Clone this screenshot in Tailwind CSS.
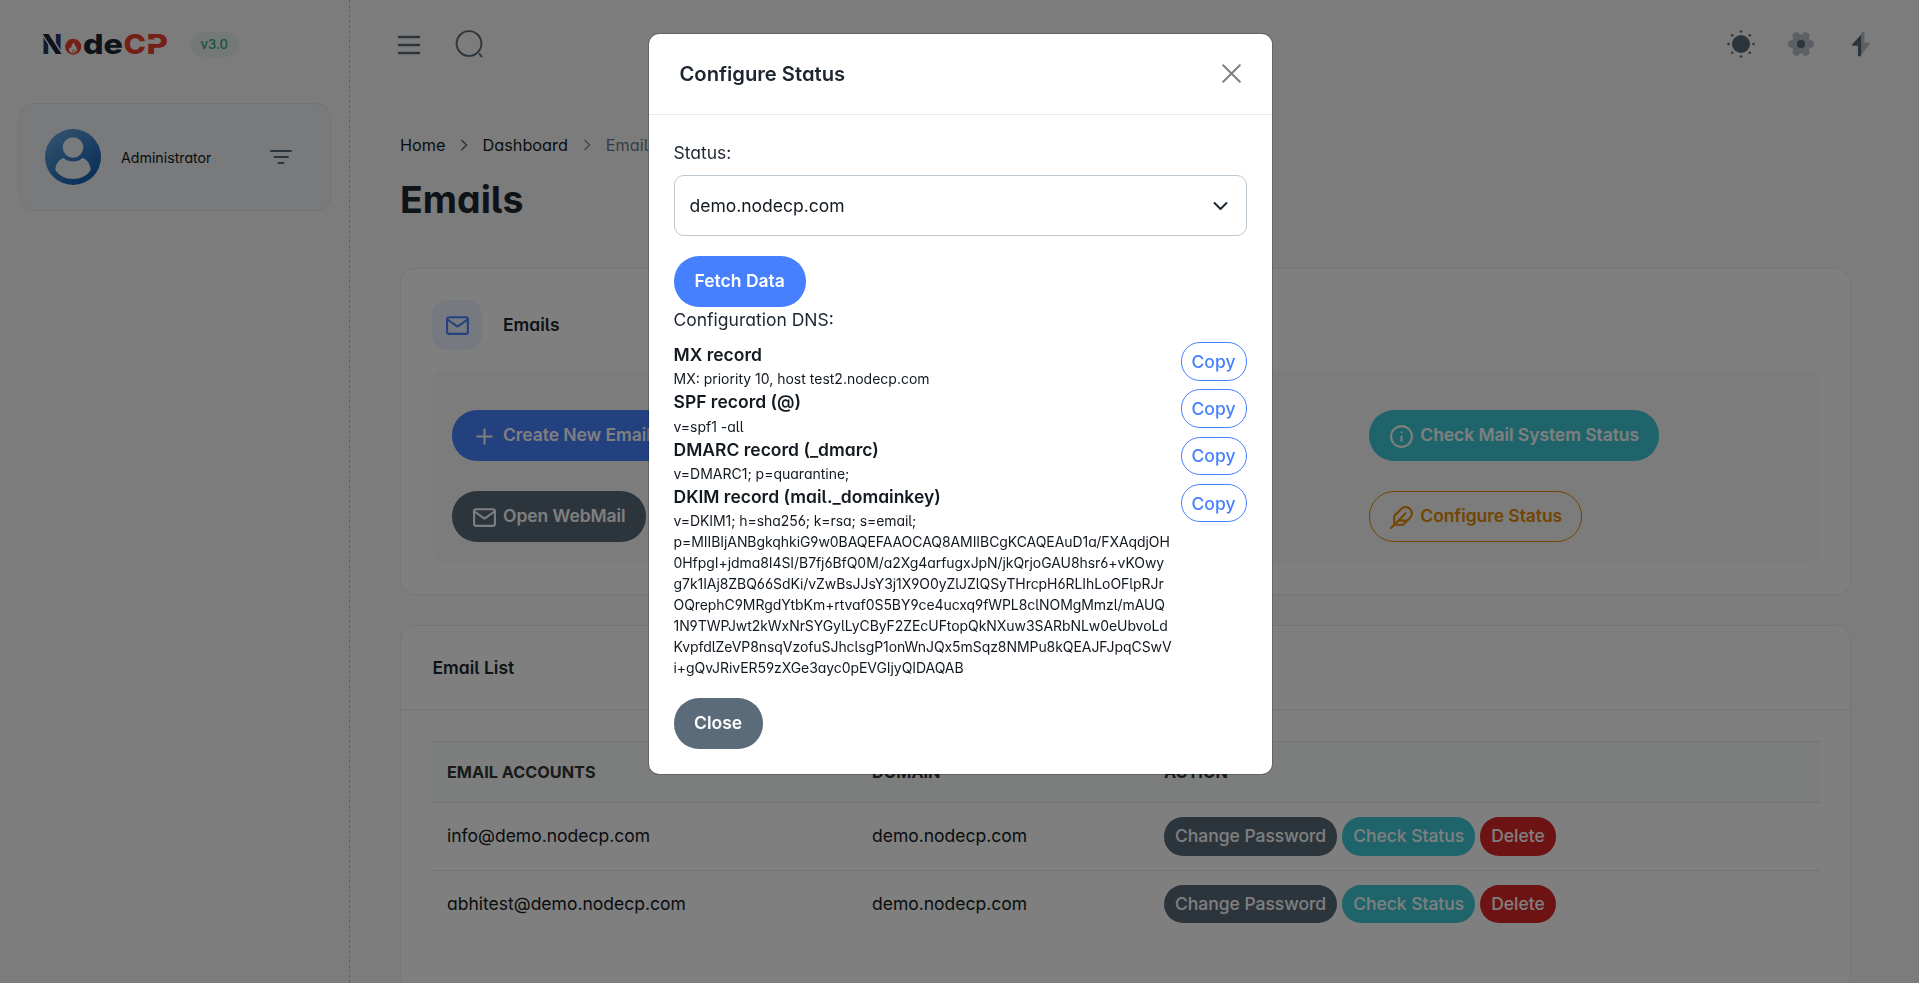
<!DOCTYPE html>
<html lang="en">
<head>
<meta charset="utf-8">
<title>NodeCP - Emails</title>
<script src="https://cdn.jsdelivr.net/npm/@tailwindcss/browser@4"></script>
</head>
<body class="h-[983px] overflow-hidden bg-[#f8f9fa] font-['Inter',sans-serif] text-[17.5px] leading-[26.25px] text-[#131920] [font-feature-settings:'cv03','cv04','cv05','cv11']">
<div class="flex h-[983px] overflow-hidden">

  <!-- Sidebar -->
  <aside class="w-[350px] shrink-0 border-r border-dashed border-[#bec8d0]">
    <div class="flex h-[103px] items-start pt-[26px] pl-[42px]">
      <svg class="h-[37px] w-[130px] overflow-visible" viewBox="0 -6 130 37" font-family="Inter" font-weight="800" font-size="27.5">
        <text x="0" y="22" fill="#2a3763" textLength="20" lengthAdjust="spacingAndGlyphs">N</text>
        <path d="M-.5 1.300h7.500l14 21.500h-7.500z" fill="#1c2733" stroke="#f8f9fa" stroke-width="1.400"/>
        <circle cx="31.200" cy="14.700" r="8" fill="#e8402f"/>
        <path d="M31 21.200c-3.600 0-5-3.600-2.800-6.200.3 1 .7 1.300 1 1.300.1-2.400 1-4.600 2.800-6.100-.2 2.500 2.600 4 2.900 7 .3 2.200-1.200 4-3.900 4z" fill="#f8f9fa"/>
        <path d="M29.800 21.200l1.700-4M32.900 21v-3" stroke="#e8402f" stroke-width=".8"/>
        <text x="41" y="22" fill="#1c2733" textLength="40" lengthAdjust="spacingAndGlyphs">de</text>
        <text x="81.500" y="22" fill="#e8402f" textLength="22.500" lengthAdjust="spacingAndGlyphs">C</text>
        <text x="104.500" y="22" fill="#e8402f" textLength="21.500" lengthAdjust="spacingAndGlyphs">P</text>
        <path d="M104.500 7.500h8v4.300h-8z" fill="#f8f9fa"/>
      </svg>
      <span class="mt-[6px] ml-[18px] h-[25px] rounded-full bg-[#e8f3ef] px-[10.5px] text-[13.1px] leading-[25px] font-medium text-[#2ca87f]">v3.0</span>
    </div>
    <div class="mr-[18px] ml-[19px] flex h-[108px] items-center rounded-[15px] border border-[#e3e8ed] bg-[#f1f4f7] pl-[25px]">
      <svg class="h-14 w-14" viewBox="0 0 56 56">
        <defs><linearGradient id="av" x1="0.1" y1="0" x2=".8" y2="1"><stop offset="0" stop-color="#69a8dc"/><stop offset="1" stop-color="#0d5cb4"/></linearGradient></defs>
        <circle cx="28" cy="28" r="28" fill="url(#av)"/>
        <circle cx="28" cy="18.500" r="10.300" fill="#f1f4f7"/>
        <path d="M18.500 29c2.500 2.500 6 3.500 9.500 3.500s7-1 9.500-3.500c5 1.500 8 6.500 8.300 12C42 47 35 50 28 50s-14-3-17.700-9c.3-5.500 3.200-10.500 8.200-12z" fill="#f1f4f7"/>
      </svg>
      <span class="mt-[2px] ml-5 text-[14.2px]">Administrator</span>
      <svg class="ml-[59px] h-[16px] w-[22px]" viewBox="0 0 22 16" fill="none" stroke="#5b6b79" stroke-width="1.900" stroke-linecap="round"><path d="M1 2h20M4.500 8h13.500M8.500 14h5"/></svg>
    </div>
  </aside>

  <!-- Page -->
  <div class="flex min-w-0 flex-1 flex-col pr-[68px] pl-[50px]">
    <header class="flex h-[88px] shrink-0 items-center">
      <svg class="mt-[2px] -ml-[3px] h-[20px] w-[24px]" viewBox="0 0 24 20" stroke="#5b6b79" stroke-width="2.400" stroke-linecap="round"><path d="M2 2h20M2 10h20M2 18h20"/></svg>
      <svg class="ml-[33px] h-[30px] w-[30px]" viewBox="0 0 30 30" fill="none" stroke="#5b6b79" stroke-width="1.900" stroke-linecap="round"><circle cx="15" cy="14.500" r="12.400"/><path d="M25.500 25l2 2.500"/></svg>
      <div class="-mr-[24px] ml-auto flex items-center gap-[32px]">
        <svg class="h-[28px] w-[28px]" viewBox="0 0 28 28" fill="#5b6b79"><circle cx="14" cy="14" r="9"/><circle cx="14" cy="1.500" r="1.300"/><circle cx="14" cy="26.500" r="1.300"/><circle cx="1.500" cy="14" r="1.300"/><circle cx="26.500" cy="14" r="1.300"/><circle cx="5.200" cy="5.200" r="1.300"/><circle cx="22.800" cy="5.200" r="1.300"/><circle cx="5.200" cy="22.800" r="1.300"/><circle cx="22.800" cy="22.800" r="1.300"/></svg>
        <svg class="h-[28px] w-[28px]" viewBox="0 0 28 28" fill="#5b6b79"><g opacity=".4"><circle cx="14" cy="14" r="9.500"/><rect x="1.200" y="10.300" width="25.600" height="7.400" rx="3"/><rect x="1.200" y="10.300" width="25.600" height="7.400" rx="3" transform="rotate(60 14 14)"/><rect x="1.200" y="10.300" width="25.600" height="7.400" rx="3" transform="rotate(120 14 14)"/></g><circle cx="14" cy="14" r="4.100"/></svg>
        <svg class="h-[28px] w-[28px]" viewBox="0 0 28 28" fill="#5b6b79"><path d="M14.200 4.500v20.500c-1 2-3 2-3.300.5v-9.700H6.400c-1.500 0-1.800-.9-1-1.900z"/><path opacity=".4" d="M14.200 12.500V3.500c.8-2.300 3.300-2.200 3.300-.5v9.500h4.600c1.200 0 1.400.9.700 1.800L14.200 24.500z"/></svg>
      </div>
    </header>

    <nav class="mt-[44px] flex h-[26px] items-center text-[16.25px]">
      <span>Home</span>
      <svg class="mr-[15px] ml-[14px] h-[12px] w-[8px]" viewBox="0 0 8 12" fill="none" stroke="#5b6b79" stroke-width="1.500"><path d="M1.500 1l5 5-5 5"/></svg>
      <span>Dashboard</span>
      <svg class="mx-[15px] h-[12px] w-[8px]" viewBox="0 0 8 12" fill="none" stroke="#8b959e" stroke-width="1.500"><path d="M1.500 1l5 5-5 5"/></svg>
      <span class="text-[#6f7b86]">Emails</span>
    </nav>
    <h2 class="mt-[18px] h-[48px] text-[37.5px] leading-[48px] font-bold text-[#1d2630]">Emails</h2>

    <section class="mt-[44px] h-[327px] shrink-0 rounded-[15px] border border-[#e7eaee] bg-white pr-[30px] pl-[31px] pt-[31px]">
      <div class="flex items-center">
        <div class="flex h-[50px] w-[50px] items-center justify-center rounded-[15px] bg-[#edf2ff]">
          <svg class="h-[25px] w-[25px]" viewBox="0 0 24 24" fill="none" stroke="#4680ff" stroke-width="2" stroke-linecap="round" stroke-linejoin="round"><path d="M4 4h16c1.100 0 2 .9 2 2v12c0 1.100-.9 2-2 2H4c-1.100 0-2-.9-2-2V6c0-1.100.9-2 2-2z"/><path d="M22 6l-10 7L2 6"/></svg>
        </div>
        <h5 class="ml-[21px] font-semibold text-[#1d2630]">Emails</h5>
      </div>
      <div class="mt-5 grid h-[192px] grid-cols-3 content-start gap-x-[28px] gap-y-[30px] rounded-[10px] bg-[#f8f9fa] px-5 pt-10 font-semibold tracking-[-0.07px] [font-feature-settings:normal]">
        <button class="flex h-[51px] items-center justify-self-start rounded-[25px] bg-[#4680ff] px-5 text-white">
          <svg class="mt-[2px] mr-[6px] h-[25px] w-[25px]" viewBox="0 0 24 24" fill="none" stroke="currentColor" stroke-width="2" stroke-linecap="round"><path d="M12 5v14M5 12h14"/></svg>Create New Email
        </button>
        <button class="col-start-3 flex h-[51px] items-center justify-self-start rounded-[25px] bg-[#3ec9d6] px-5 text-white">
          <svg class="mt-[2px] mr-[6px] h-[25px] w-[25px]" viewBox="0 0 24 24" fill="none" stroke="currentColor" stroke-width="2" stroke-linecap="round" stroke-linejoin="round"><circle cx="12" cy="12" r="10"/><path d="M12 16v-4M12 8h.01"/></svg>Check Mail System Status
        </button>
        <button class="flex h-[51px] items-center justify-self-start rounded-[25px] bg-[#5b6b79] px-5 text-white">
          <svg class="mt-[2px] mr-[6px] h-[25px] w-[25px]" viewBox="0 0 24 24" fill="none" stroke="currentColor" stroke-width="2" stroke-linecap="round" stroke-linejoin="round"><path d="M4 4h16c1.100 0 2 .9 2 2v12c0 1.100-.9 2-2 2H4c-1.100 0-2-.9-2-2V6c0-1.100.9-2 2-2z"/><path d="M22 6l-10 7L2 6"/></svg>Open WebMail
        </button>
        <button class="col-start-3 flex h-[51px] items-center justify-self-start rounded-[25px] border border-[#e58a00] px-[19px] text-[#e58a00]">
          <svg class="mt-[2px] mr-[6px] h-[25px] w-[25px]" viewBox="0 0 24 24" fill="none" stroke="currentColor" stroke-width="2" stroke-linecap="round" stroke-linejoin="round"><path d="M20.240 12.240a6 6 0 0 0-8.490-8.490L5 10.500V19h8.500zM16 8L2 22M17.500 15H9"/></svg>Configure Status
        </button>
      </div>
    </section>

    <section class="mt-[30px] h-[366px] shrink-0 rounded-[15px] border border-[#e7eaee] bg-white">
      <h5 class="h-[84px] border-b border-[#e7eaee] px-[31.5px] leading-[84px] font-semibold text-[#1d2630]">Email List</h5>
      <div class="pt-[31px] pr-[30px] pl-[31px]">
        <table class="w-full table-fixed border-collapse text-left">
          <colgroup><col class="w-[425px]"><col class="w-[292px]"><col></colgroup>
          <thead>
            <tr class="h-[61px] border-y border-[#e4e9ea] bg-[#f7fcf9] text-[16.25px] text-[#343434]">
              <th class="px-[15px] font-bold">EMAIL ACCOUNTS</th><th class="px-[15px] font-bold">DOMAIN</th><th class="px-[15px] font-bold">ACTION</th>
            </tr>
          </thead>
          <tbody>
            <tr class="h-[68px] border-b border-[#e4e7ea]">
              <td class="px-[15px]">info@demo.nodecp.com</td><td class="px-[15px]">demo.nodecp.com</td>
              <td class="px-[15px]"><div class="flex gap-[5px] font-medium tracking-[-0.03px] text-white [font-feature-settings:normal]">
                <button class="h-[39px] rounded-[19px] bg-[#5b6b79] px-[11px]">Change Password</button><button class="h-[39px] rounded-[19px] bg-[#3ec9d6] px-[11px]">Check Status</button><button class="h-[39px] rounded-[19px] bg-[#dc2626] px-[11px]">Delete</button></div></td>
            </tr>
            <tr class="h-[67px]">
              <td class="px-[15px]">abhitest@demo.nodecp.com</td><td class="px-[15px]">demo.nodecp.com</td>
              <td class="px-[15px]"><div class="flex gap-[5px] font-medium tracking-[-0.03px] text-white [font-feature-settings:normal]">
                <button class="h-[38px] rounded-[19px] bg-[#5b6b79] px-[11px]">Change Password</button><button class="h-[38px] rounded-[19px] bg-[#3ec9d6] px-[11px]">Check Status</button><button class="h-[38px] rounded-[19px] bg-[#dc2626] px-[11px]">Delete</button></div></td>
            </tr>
          </tbody>
        </table>
      </div>
    </section>
  </div>
</div>

<!-- Modal -->
<div class="fixed inset-0 flex items-start justify-center bg-black/50 pt-[33px] pl-px">
  <div class="h-[742px] w-[625px] rounded-[11px] border border-black/20 bg-white bg-clip-padding text-[#1d2630]">
    <div class="flex h-[81px] items-center justify-between border-b border-[#e7eaee] pr-[30.5px] pl-[31px]">
      <h5 class="text-[20.2px] font-semibold">Configure Status</h5>
      <svg class="mb-px h-[19px] w-[19px]" viewBox="0 0 19 19" stroke="#7f7f7f" stroke-width="2" stroke-linecap="round"><path d="M1.200 1.200l16.600 16.600M17.800 1.200L1.200 17.800"/></svg>
    </div>
    <div class="flex flex-col items-start px-[25px] pt-[25px]">
      <label>Status:</label>
      <div class="mt-[9px] flex h-[61px] w-full items-center justify-between rounded-[10px] border border-[#bec8d0] pr-[18px] pl-[15px] text-[#131920]">
        <span>demo.nodecp.com</span>
        <svg class="h-[10px] w-[15px]" viewBox="0 0 15 10" fill="none" stroke="#1d2630" stroke-width="2" stroke-linecap="round" stroke-linejoin="round"><path d="M1.500 2l6 6 6-6"/></svg>
      </div>
      <button class="mt-5 h-[50.500px] rounded-[25px] bg-[#4680ff] px-[21px] font-semibold text-white [font-feature-settings:normal]">Fetch Data</button>
      <p>Configuration DNS:</p>
      <div class="mt-[9px] flex w-full flex-col text-[14px] leading-[21px] text-[#131920]">
        <div class="flex h-[47.250px] items-start justify-between">
          <div><b class="block text-[17.5px] leading-[26.25px] font-semibold">MX record</b>MX: priority 10, host test2.nodecp.com</div>
          <button class="h-[38.500px] rounded-[19px] border border-[#4680ff] px-[10px] text-[17.5px] font-medium text-[#4680ff]">Copy</button>
        </div>
        <div class="flex h-[47.250px] items-start justify-between">
          <div><b class="block text-[17.5px] leading-[26.25px] font-semibold">SPF record (@)</b>v=spf1 -all</div>
          <button class="h-[38.500px] rounded-[19px] border border-[#4680ff] px-[10px] text-[17.5px] font-medium text-[#4680ff]">Copy</button>
        </div>
        <div class="flex h-[47.250px] items-start justify-between">
          <div><b class="block text-[17.5px] leading-[26.25px] font-semibold">DMARC record (_dmarc)</b>v=DMARC1; p=quarantine;</div>
          <button class="h-[38.500px] rounded-[19px] border border-[#4680ff] px-[10px] text-[17.5px] font-medium text-[#4680ff]">Copy</button>
        </div>
        <div class="flex h-[194.250px] items-start justify-between">
          <div class="whitespace-nowrap tracking-[-0.065px]"><b class="block text-[17.5px] leading-[26.25px] font-semibold tracking-normal">DKIM record (mail._domainkey)</b>v=DKIM1; h=sha256; k=rsa; s=email;<br>p=MIIBIjANBgkqhkiG9w0BAQEFAAOCAQ8AMIIBCgKCAQEAuD1a/FXAqdjOH<br>0HfpgI+jdma8I4SI/B7fj6BfQ0M/a2Xg4arfugxJpN/jkQrjoGAU8hsr6+vKOwy<br>g7k1IAj8ZBQ66SdKi/vZwBsJJsY3j1X9O0yZlJZlQSyTHrcpH6RLIhLoOFlpRJr<br>OQrephC9MRgdYtbKm+rtvaf0S5BY9ce4ucxq9fWPL8clNOMgMmzl/mAUQ<br>1N9TWPJwt2kWxNrSYGylLyCByF2ZEcUFtopQkNXuw3SARbNLw0eUbvoLd<br>KvpfdlZeVP8nsqVzofuSJhclsgP1onWnJQx5mSqz8NMPu8kQEAJFJpqCSwV<br>i+gQvJRivER59zXGe3ayc0pEVGIjyQIDAQAB</div>
          <button class="h-[38.500px] rounded-[19px] border border-[#4680ff] px-[10px] text-[17.5px] font-medium text-[#4680ff]">Copy</button>
        </div>
      </div>
      <button class="mt-5 h-[51px] rounded-[25px] bg-[#5b6b79] px-[20.5px] font-semibold text-white [font-feature-settings:normal]">Close</button>
    </div>
  </div>
</div>
</body>
</html>
